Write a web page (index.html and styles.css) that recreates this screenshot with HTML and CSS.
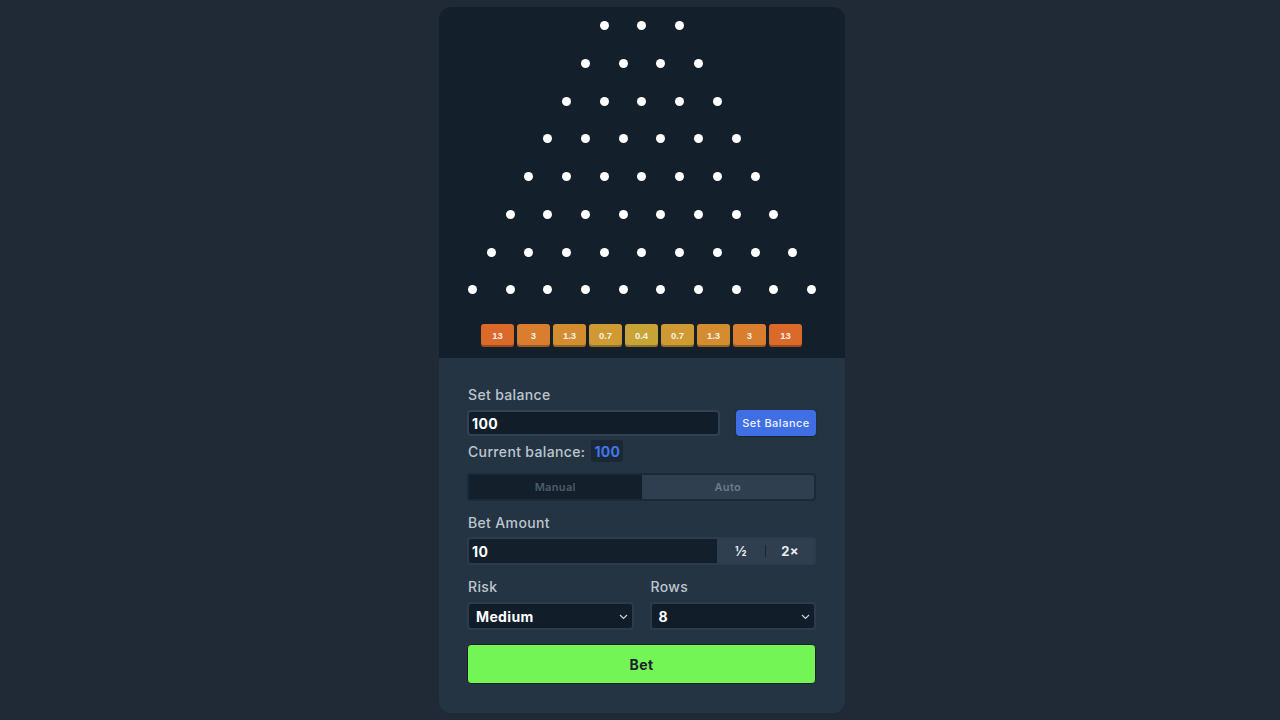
FILE: index.html
```html
<!DOCTYPE html>
<html>
<head>
<meta charset="utf-8">
<link rel="stylesheet" href="styles.css">
</head>
<body>
<div class="page">
  <div class="card">
    <div class="board">
      <div class="pegs">
        <div class="row"><i></i><i></i><i></i></div>
        <div class="row"><i></i><i></i><i></i><i></i></div>
        <div class="row"><i></i><i></i><i></i><i></i><i></i></div>
        <div class="row"><i></i><i></i><i></i><i></i><i></i><i></i></div>
        <div class="row"><i></i><i></i><i></i><i></i><i></i><i></i><i></i></div>
        <div class="row"><i></i><i></i><i></i><i></i><i></i><i></i><i></i><i></i></div>
        <div class="row"><i></i><i></i><i></i><i></i><i></i><i></i><i></i><i></i><i></i></div>
        <div class="row"><i></i><i></i><i></i><i></i><i></i><i></i><i></i><i></i><i></i><i></i></div>
      </div>
      <div class="bins">
        <div class="bin b1">13</div>
        <div class="bin b2">3</div>
        <div class="bin b3">1.3</div>
        <div class="bin b4">0.7</div>
        <div class="bin b5">0.4</div>
        <div class="bin b4">0.7</div>
        <div class="bin b3">1.3</div>
        <div class="bin b2">3</div>
        <div class="bin b1">13</div>
      </div>
    </div>
    <div class="panel">
      <label class="label">Set balance</label>
      <div class="balance-row">
        <div class="input wide">100</div>
        <button class="btn-blue">Set Balance</button>
      </div>
      <div class="current">Current balance: <span class="cur-val">100</span></div>
      <div class="tabs">
        <div class="tab active">Manual</div>
        <div class="tab">Auto</div>
      </div>
      <label class="label mt12">Bet Amount</label>
      <div class="bet-row">
        <div class="bet-input">10</div>
        <div class="bet-btn">½</div>
        <div class="sep"></div>
        <div class="bet-btn">2×</div>
      </div>
      <div class="grid2">
        <div class="field">
          <label class="label">Risk</label>
          <div class="select">Medium
            <svg class="chev" width="9" height="6" viewBox="0 0 9 6"><path d="M1 1l3.5 3.5L8 1" fill="none" stroke="#c9d2da" stroke-width="1.2"/></svg>
          </div>
        </div>
        <div class="field">
          <label class="label">Rows</label>
          <div class="select">8
            <svg class="chev" width="9" height="6" viewBox="0 0 9 6"><path d="M1 1l3.5 3.5L8 1" fill="none" stroke="#c9d2da" stroke-width="1.2"/></svg>
          </div>
        </div>
      </div>
      <button class="bet">Bet</button>
    </div>
  </div>
</div>
</body>
</html>
```
FILE: styles.css
```css
* { box-sizing: border-box; }
html, body { margin: 0; padding: 0; }
body {
  background: #1f2a36;
  font-family: "Inter", "Open Sans", sans-serif;
  color: #c3ccd6;
}
.page {
  display: flex;
  justify-content: center;
  padding: 7px 0 0 4px;
  height: 720px;
}
.card {
  width: 406px;
  height: 706px;
  border-radius: 12px;
  overflow: hidden;
  display: flex;
  flex-direction: column;
  background: #253443;
}
.board {
  background: #131f2b;
  height: 351px;
  display: flex;
  flex-direction: column;
  align-items: center;
}
.pegs { display: flex; flex-direction: column; }
.row {
  height: 37.71px;
  display: flex;
  justify-content: center;
  align-items: center;
  gap: 28.71px;
}
.row i {
  width: 9px;
  height: 9px;
  border-radius: 50%;
  background: #ffffff;
  display: block;
}
.bins {
  display: flex;
  gap: 3px;
  margin-top: 15px;
  margin-left: -1px;
}
.bin {
  width: 33px;
  height: 23px;
  border-radius: 3px;
  display: flex;
  align-items: center;
  justify-content: center;
  font-family: "Liberation Sans", Arial, sans-serif;
  font-size: 9.5px;
  font-weight: 700;
  color: #f5f0e8;
  box-shadow: inset 0 -2px 0 rgba(0,0,0,0.28);
}
.b1 { background: #db6a2a; }
.b2 { background: #d97d2f; }
.b3 { background: #d48c31; }
.b4 { background: #cf9a33; }
.b5 { background: #c8a436; }
.panel {
  flex: 1;
  padding: 27px 29px 29px 28px;
  display: flex;
  flex-direction: column;
  letter-spacing: 0.35px;
}
.label {
  display: block;
  font-size: 14px;
  line-height: 20px;
  color: #bcc6d0;
  font-weight: 500;
  padding-left: 1px;
}
.mt12 { margin-top: 12px; }
.balance-row {
  display: flex;
  gap: 16px;
  margin-top: 5px;
  align-items: center;
}
.input {
  height: 26px;
  background: #111d29;
  border: 2px solid #324252;
  border-radius: 4px;
  color: #ffffff;
  font-weight: 700;
  font-size: 14px;
  display: flex;
  align-items: center;
  padding-left: 3px;
}
.wide { flex: 1; }
.btn-blue {
  width: 80px;
  height: 26px;
  border: none;
  border-radius: 4px;
  background: #406ee4;
  color: #eef2ff;
  font-family: inherit;
  font-size: 11px;
  font-weight: 500;
  letter-spacing: 0.5px;
  box-shadow: 0 1px 2px rgba(0,0,0,0.3);
}
.current {
  margin-top: 4px;
  height: 22px;
  display: flex;
  align-items: center;
  font-size: 14px;
  color: #bcc6d0;
  font-weight: 500;
  padding-left: 1px;
}
.cur-val {
  margin-left: 6px;
  background: #1a2735;
  color: #4177eb;
  font-weight: 700;
  height: 22px;
  padding: 0 3px;
  display: flex;
  align-items: center;
  border-radius: 3px;
}
.tabs {
  margin-top: 11px;
  height: 28px;
  display: flex;
  border: 2px solid #1c2937;
  border-radius: 4px;
  overflow: hidden;
  background: #131f2b;
}
.tab {
  flex: 1;
  display: flex;
  align-items: center;
  justify-content: center;
  font-size: 11px;
  font-weight: 600;
  color: #6b7b8b;
  background: #2f3f4f;
}
.tab.active {
  background: #131f2b;
  color: #4b5c6c;
}
.bet-row {
  margin-top: 4px;
  height: 28px;
  display: flex;
  align-items: center;
  background: #2f3f4f;
  border: 2px solid #2c3c4c;
  border-radius: 4px;
  overflow: hidden;
}
.bet-input {
  width: 248px;
  height: 100%;
  background: #131f2b;
  color: #ffffff;
  font-size: 14px;
  font-weight: 700;
  display: flex;
  align-items: center;
  padding-left: 3px;
}
.bet-btn {
  flex: 1;
  text-align: center;
  color: #e8edf2;
  font-size: 13px;
  font-weight: 700;
}
.sep {
  width: 1px;
  height: 12px;
  background: #1a2633;
}
.grid2 {
  margin-top: 12px;
  display: grid;
  grid-template-columns: 1fr 1fr;
  gap: 16px;
}
.field .select { margin-top: 5px; }
.select {
  position: relative;
  height: 28px;
  background: #111d29;
  border: 2px solid #2c3c4c;
  border-radius: 4px;
  color: #ffffff;
  font-size: 14px;
  font-weight: 700;
  display: flex;
  align-items: center;
  padding-left: 7px;
}
.chev {
  position: absolute;
  right: 4px;
  top: 10px;
}
.bet {
  margin-top: 14px;
  height: 40px;
  border: 1px solid #16202b;
  border-radius: 4px;
  background: #74f556;
  color: #18222c;
  font-family: inherit;
  font-size: 14px;
  font-weight: 700;
  letter-spacing: 0.35px;
}
```
